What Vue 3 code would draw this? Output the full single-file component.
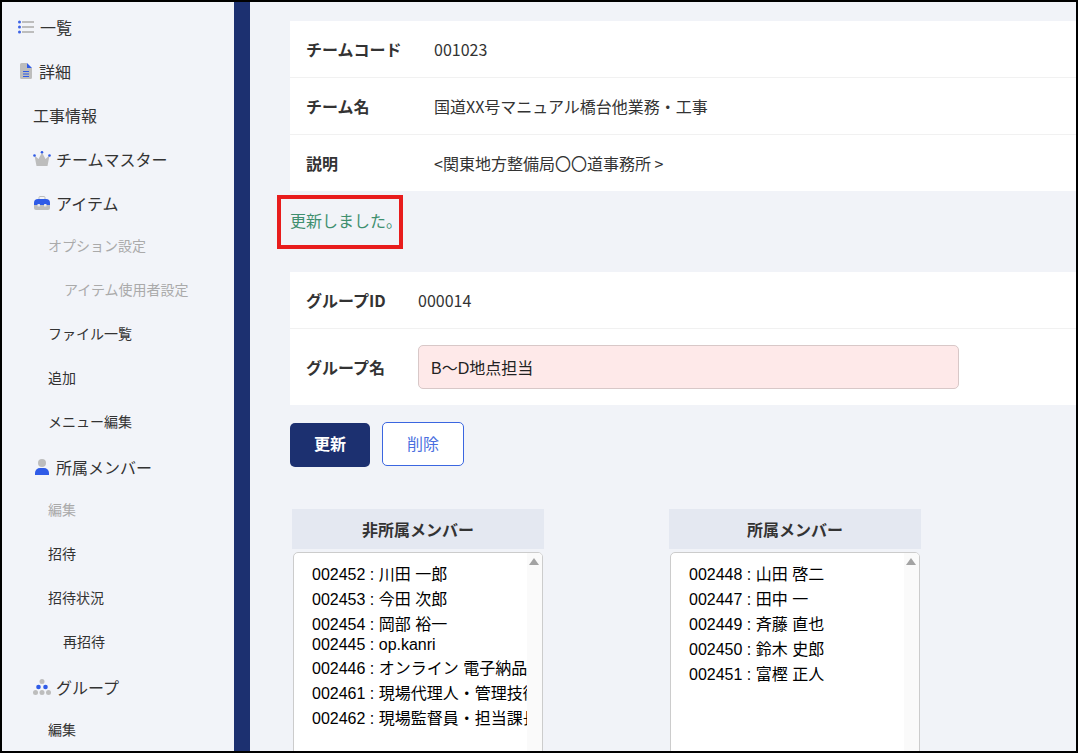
<script setup>
const nonMembers = [
  '002452 : 川田 一郎',
  '002453 : 今田 次郎',
  '002454 : 岡部 裕一',
  '002445 : op.kanri',
  '002446 : オンライン 電子納品',
  '002461 : 現場代理人・管理技術者',
  '002462 : 現場監督員・担当課長',
]
const members = [
  '002448 : 山田 啓二',
  '002447 : 田中 一',
  '002449 : 斉藤 直也',
  '002450 : 鈴木 史郎',
  '002451 : 富樫 正人',
]
</script>

<template>
  <div class="page">
    <aside class="sidebar">
      <a class="item top">
        <svg class="ic-list" viewBox="0 0 16 14">
          <g fill="#bdbdbd"><rect x="4" y="1" width="12" height="2" /><rect x="4" y="6" width="12" height="2" /><rect x="4" y="11" width="12" height="2" /></g>
          <g fill="#3d63e6"><circle cx="1.5" cy="2" r="1.5" /><circle cx="1.5" cy="7" r="1.5" /><circle cx="1.5" cy="12" r="1.5" /></g>
        </svg>
        一覧
      </a>
      <a class="item top">
        <svg class="ic-doc" viewBox="0 0 12 16">
          <path d="M1.5 0H7v5h5v9.5A1.5 1.5 0 0 1 10.5 16h-9A1.5 1.5 0 0 1 0 14.500V1.500A1.500 1.500 0 0 1 1.500 0z" fill="#bdbdbd" />
          <path d="M7 0l5 5H7z" fill="#2f5be7" />
          <path d="M3 8h6v1H3zM3 10.500h6v1H3zM3 13h6v1H3z" fill="#2f5be7" />
        </svg>
        詳細
      </a>
      <a class="item second plain">工事情報</a>
      <a class="item second">
        <svg class="ic-crown" viewBox="0 0 18 16">
          <path d="M1.500 4.500l4 3.500L9 1.500 12.500 8l4-3.500L14.500 15h-11z" fill="#bdbdbd" />
          <g fill="#2f5be7"><circle cx="1.500" cy="4.500" r="1.300" /><circle cx="9" cy="1.300" r="1.300" /><circle cx="16.500" cy="4.500" r="1.300" /></g>
        </svg>
        チームマスター
      </a>
      <a class="item second">
        <svg class="ic-box" viewBox="0 0 16 14">
          <path d="M5 3V1.500A1 1 0 0 1 6 .5h4a1 1 0 0 1 1 1V3" fill="none" stroke="#bdbdbd" />
          <path d="M0 8h16v4a2 2 0 0 1-2 2H2a2 2 0 0 1-2-2z" fill="#bdbdbd" />
          <path d="M4 3h8a4 4 0 0 1 4 4v2H0V7a4 4 0 0 1 4-4z" fill="#2f5be7" />
          <rect x="3.500" y="8" width="2.500" height="2.500" rx=".5" fill="#e6e8ee" />
          <rect x="10" y="8" width="2.500" height="2.500" rx=".5" fill="#e6e8ee" />
        </svg>
        アイテム
      </a>
      <div class="sub">
        <a class="item third muted">オプション設定</a>
        <a class="item fourth muted">アイテム使用者設定</a>
        <a class="item third">ファイル一覧</a>
        <a class="item third">追加</a>
        <a class="item third">メニュー編集</a>
      </div>
      <a class="item second">
        <svg class="ic-person" viewBox="0 0 14 16">
          <circle cx="7" cy="4" r="4" fill="#bdbdbd" />
          <path d="M0 16v-2a5 5 0 0 1 5-5h4a5 5 0 0 1 5 5v2z" fill="#2f5be7" />
        </svg>
        所属メンバー
      </a>
      <div class="sub">
        <a class="item third muted">編集</a>
        <a class="item third">招待</a>
        <a class="item third">招待状況</a>
        <a class="item fourth short">再招待</a>
      </div>
      <a class="item second">
        <svg class="ic-group" viewBox="0 0 18 16">
          <circle cx="9" cy="2.500" r="2.500" fill="#bdbdbd" />
          <circle cx="5.500" cy="8" r="2.300" fill="#2f5be7" /><circle cx="12.500" cy="8" r="2.300" fill="#2f5be7" />
          <g fill="#bdbdbd"><circle cx="2.500" cy="13.500" r="2.500" /><circle cx="9" cy="13.500" r="2.500" /><circle cx="15.500" cy="13.500" r="2.500" /></g>
        </svg>
        グループ
      </a>
      <div class="sub">
        <a class="item third">編集</a>
      </div>
    </aside>

    <div class="divider"></div>

    <main class="main">
      <section class="panel team">
        <div class="row">
          <div class="label">チームコード</div>
          <div class="value">001023</div>
        </div>
        <div class="row">
          <div class="label">チーム名</div>
          <div class="value">国道XX号マニュアル橋台他業務・工事</div>
        </div>
        <div class="row">
          <div class="label">説明</div>
          <div class="value">&lt;関東地方整備局〇〇道事務所 &gt;</div>
        </div>
      </section>

      <p class="message">
        更新しました。
        <span class="highlight"></span>
      </p>

      <section class="panel group">
        <div class="row">
          <div class="label">グループID</div>
          <div class="value">000014</div>
        </div>
        <div class="row name-row">
          <div class="label">グループ名</div>
          <input class="name-input" value="B～D地点担当" />
        </div>
      </section>

      <div class="actions">
        <button class="btn primary">更新</button>
        <button class="btn outline">削除</button>
      </div>

      <div class="columns">
        <div class="column">
          <div class="col-head">非所属メンバー</div>
          <div class="listbox">
            <div class="options">
              <div v-for="m in nonMembers" :key="m" class="option">{{ m }}</div>
            </div>
            <div class="scroll"><span class="arrow"></span></div>
          </div>
        </div>
        <div class="column">
          <div class="col-head">所属メンバー</div>
          <div class="listbox">
            <div class="options">
              <div v-for="m in members" :key="m" class="option">{{ m }}</div>
            </div>
            <div class="scroll"><span class="arrow"></span></div>
          </div>
        </div>
      </div>
    </main>
  </div>
</template>

<style>
html, body { margin: 0; background: #000; }
</style>

<style scoped>
.page {
  width: 1078px;
  height: 753px;
  box-sizing: border-box;
  border: 2px solid #000;
  display: flex;
  overflow: hidden;
  background: #f1f3f8;
  color: #333;
  font-family: "Noto Sans CJK JP", sans-serif;
}

/* sidebar */
.sidebar {
  width: 232px;
  flex: none;
  padding-top: 3px;
  background: #f2f4f9;
}
.item {
  height: 44px;
  display: flex;
  align-items: center;
  font-size: 16px;
  white-space: nowrap;
}
.top { padding-left: 16px; gap: 6px; }
.second { padding-left: 31px; gap: 5px; }
.second.plain { gap: 0; }
.third { padding-left: 46px; font-size: 14px; }
.fourth { padding-left: 62px; font-size: 14px; }
.fourth.short { padding-left: 61px; }
.muted { color: #aaa; }
.sub { margin-top: -2px; margin-bottom: 2px; }

.ic-list { width: 16px; height: 14px; }
.ic-doc { width: 12px; height: 16px; margin-left: 2px; margin-right: 1px; }
.ic-crown { width: 18px; height: 16px; }
.ic-box { width: 16px; height: 14px; margin-left: 1px; margin-right: 1px; }
.ic-person { width: 14px; height: 16px; margin-left: 2px; margin-right: 2px; }
.ic-group { width: 18px; height: 16px; }

.divider { width: 16px; flex: none; background: #1c3070; }

/* main */
.main {
  flex: 1;
  min-width: 0;
  padding: 19px 0 0 40px;
}
.panel { background: #fff; }
.row {
  display: flex;
  align-items: center;
  height: 56px;
  font-size: 16px;
  border-bottom: 1px solid #f1f1f1;
}
.row:last-child { border-bottom: 0; }
.label {
  flex: none;
  font-weight: 700;
  padding-left: 16px;
}
.team .label { width: 128px; }
.group .label { width: 112px; }
.value { color: #333; }

.message {
  position: relative;
  margin: 0;
  height: 81px;
  padding-top: 18px;
  box-sizing: border-box;
  font-size: 16px;
  line-height: 22px;
  color: #3f8f6f;
}
.highlight {
  position: absolute;
  left: -13px;
  top: 4px;
  width: 126px;
  height: 54px;
  box-sizing: border-box;
  border: 4px solid #e81c1c;
}

.name-row { height: 76px; }
.name-input {
  width: 541px;
  height: 44px;
  box-sizing: border-box;
  margin: 0;
  padding: 0 12px;
  border: 1px solid #d8c8c8;
  border-radius: 5px;
  background: #fee9e9;
  color: #222;
  font: 16px "Liberation Sans", "Noto Sans CJK JP", sans-serif;
}

.actions {
  display: flex;
  align-items: flex-start;
  gap: 12px;
  margin-top: 17px;
}
.btn {
  font-family: inherit;
  font-size: 16px;
  border-radius: 5px;
  cursor: pointer;
}
.primary {
  width: 80px;
  height: 44px;
  margin-top: 1px;
  padding: 0 0 4px;
  border: 0;
  background: #1c3070;
  color: #fff;
  font-weight: 700;
}
.outline {
  width: 82px;
  height: 44px;
  padding: 0 0 2px;
  border: 1px solid #3b66e0;
  background: #fff;
  color: #4a6fe0;
}

.columns {
  display: flex;
  gap: 125px;
  margin-top: 42px;
  padding-left: 2px;
}
.column { width: 252px; }
.col-head {
  height: 40px;
  display: flex;
  align-items: center;
  justify-content: center;
  background: #e4e8f1;
  font-size: 16px;
  font-weight: 700;
}
.listbox {
  display: flex;
  height: 300px;
  margin: 3px 1px 0;
  border: 1px solid #ccc;
  border-radius: 5px;
  background: #fff;
  overflow: hidden;
}
.options {
  flex: 1;
  min-width: 0;
  padding: 7px 0 0 18px;
  font: 16px "Liberation Sans", "Noto Sans CJK JP", sans-serif;
  color: #000;
}
.option {
  padding: 1px 0 0;
  white-space: nowrap;
  overflow: hidden;
}
.scroll {
  width: 15px;
  flex: none;
  background: #fafafa;
  position: relative;
}
.arrow {
  position: absolute;
  top: 5px;
  left: 2px;
  border-left: 5px solid transparent;
  border-right: 5px solid transparent;
  border-bottom: 7px solid #a3a3a3;
}
</style>
